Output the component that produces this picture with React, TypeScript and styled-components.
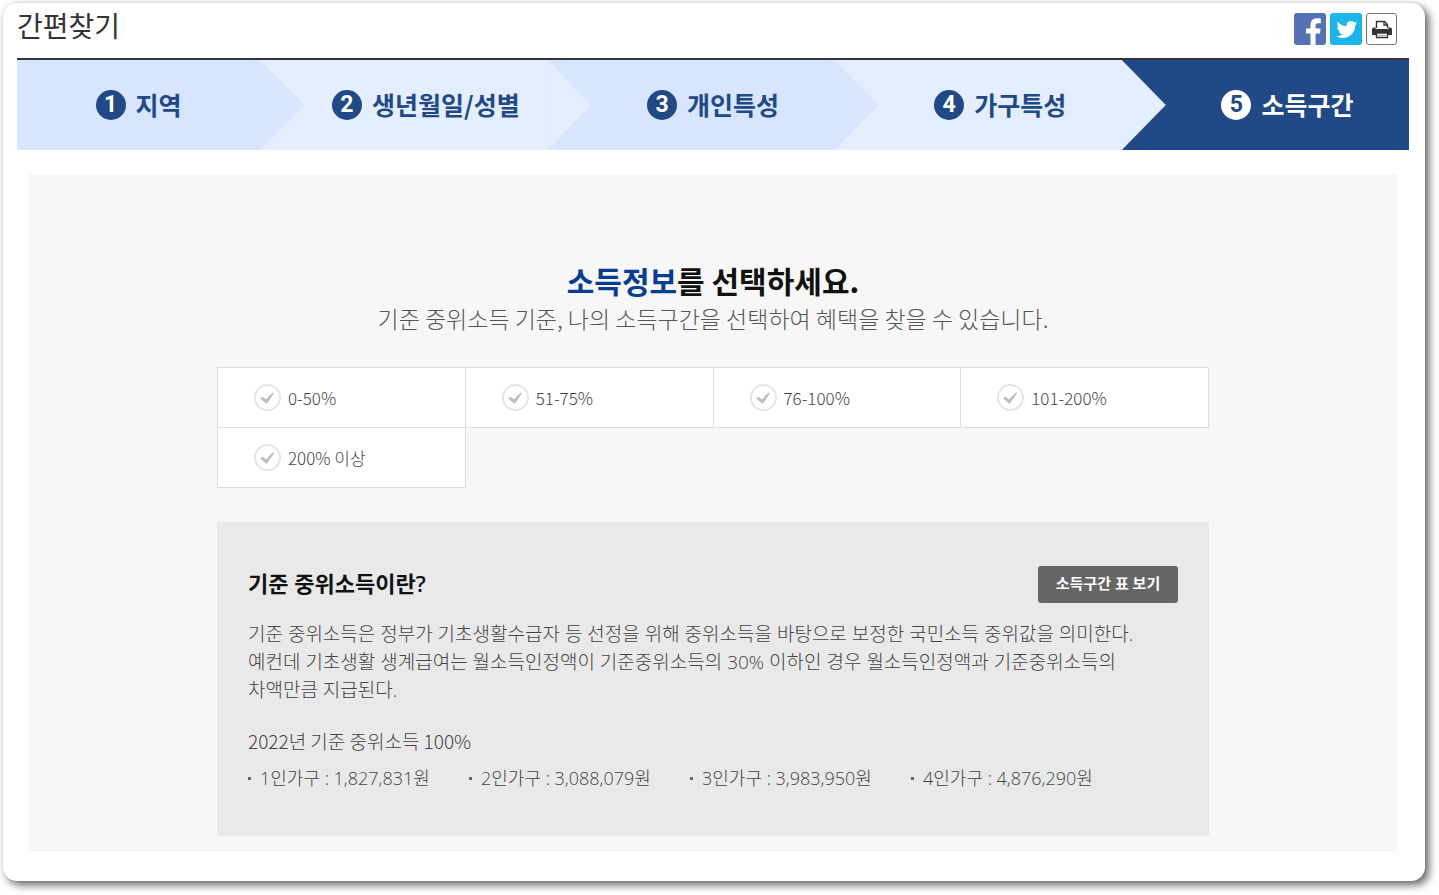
import React from "react";
import styled, { createGlobalStyle } from "styled-components";

const GlobalStyle = createGlobalStyle`
  * { box-sizing: border-box; }
  body {
    margin: 0;
    background: #fff;
    color: #555;
    font-family: "Noto Sans CJK KR", "Noto Sans", sans-serif;
    word-break: keep-all;
  }
  h1, h2, h3, p, ol, ul, fieldset { margin: 0; padding: 0; border: 0; }
  ol, ul { list-style: none; }
`;

const navy = "#214985";
const mixedFont = `"Open Sans", "Noto Sans CJK KR", sans-serif`;

const Shell = styled.main`
  margin: 3px 14px 14px 3px;
  padding: 0 16px 29px 14px;
  border-radius: 14px;
  background: #fff;
  box-shadow: 4px 4px 8px 0 rgba(0, 0, 0, 0.6), 0 0 4px rgba(0, 0, 0, 0.1);
`;

const Header = styled.header`
  display: flex;
  justify-content: space-between;
  height: 55px;
  padding-right: 12px;
`;

const PageTitle = styled.h1`
  color: #333;
  font-size: 28px;
  font-weight: 400;
  line-height: 44px;
`;

const Actions = styled.div`
  display: flex;
  gap: 4px;
  padding-top: 10px;
`;

const shareColors = { facebook: "#5472b5", twitter: "#1bb5ea" };

const ShareLink = styled.a<{ $kind: keyof typeof shareColors }>`
  width: 32px;
  height: 32px;
  border-radius: 3px;
  background: ${(p) => shareColors[p.$kind]};
  svg { display: block; }
`;

const PrintButton = styled.button`
  width: 31px;
  height: 32px;
  padding: 0;
  border: 1px solid #777;
  border-radius: 3px;
  background: #fff;
  svg { display: block; }
`;

const Steps = styled.ol`
  display: flex;
  height: 92px;
  border-top: 2px solid #333338;
`;

const stepColors = ["#d7e5ff", "#e4eeff", "#d7e5ff", "#e4eeff", navy];

const Step = styled.li<{ $index: number; $last: boolean }>`
  display: flex;
  flex: 1 1 ${(p) => (p.$last ? 0 : 44)}px;
  background: ${(p) => stepColors[p.$index]};
  color: ${(p) => (p.$last ? "#fff" : navy)};
`;

const StepLabel = styled.span`
  display: flex;
  flex: 1;
  align-items: center;
  justify-content: center;
  gap: 10px;
`;

const StepName = styled.span`
  padding-bottom: 2px;
  font-size: 25px;
  font-weight: 700;
  line-height: 34px;
  white-space: nowrap;
`;

const StepNumber = styled.span<{ $active: boolean }>`
  width: 30px;
  height: 30px;
  border-radius: 50%;
  background: ${(p) => (p.$active ? "#fff" : navy)};
  color: ${(p) => (p.$active ? navy : "#fff")};
  font-family: Roboto, sans-serif;
  font-size: 23px;
  font-weight: 700;
  line-height: 30px;
  text-align: center;
`;

const Chevron = styled.span<{ $index: number }>`
  width: 44px;
  background: ${(p) => stepColors[p.$index + 1]};
  &::before {
    content: "";
    display: block;
    height: 100%;
    background: ${(p) => stepColors[p.$index]};
    clip-path: polygon(0 0, 100% 50%, 0 100%);
  }
`;

const Panel = styled.section`
  margin: 24px 12px 0;
  padding: 87px 16px 16px;
  background: #f7f7f7;
`;

const Content = styled.div`
  max-width: 992px;
  margin: 0 auto;
`;

const Question = styled.h2`
  color: #111;
  font-size: 30px;
  font-weight: 700;
  line-height: 38px;
  text-align: center;
  em { color: #073e92; font-style: normal; }
`;

const Guide = styled.p`
  margin-bottom: 30px;
  color: #555;
  font-size: 23px;
  font-weight: 300;
  line-height: 38px;
  text-align: center;
`;

const Options = styled.fieldset`
  display: grid;
  grid-template-columns: repeat(4, 1fr);
  min-width: 0;
  padding: 1px 0 0 1px;
`;

const Option = styled.label`
  display: flex;
  align-items: center;
  gap: 7px;
  height: 61px;
  margin: -1px 0 0 -1px;
  padding-left: 36px;
  border: 1px solid #ddd;
  background: #fff;
  color: #444;
  font-size: 17px;
  font-weight: 300;
  cursor: pointer;
`;

const Tick = styled.span`
  display: grid;
  > * { grid-area: 1 / 1; }
  svg { color: #bdbdbd; pointer-events: none; }
  input:checked + svg { color: ${navy}; }
`;

const Radio = styled.input`
  appearance: none;
  width: 27px;
  height: 27px;
  margin: 0;
  border: 2px solid #e5e5e5;
  border-radius: 50%;
  background: #fff;
`;

const Info = styled.section`
  margin-top: 34px;
  padding: 44px 31px;
  background: #e9e9e9;
  color: #444;
`;

const InfoHead = styled.div`
  display: flex;
  align-items: flex-start;
  justify-content: space-between;
  margin-bottom: 17px;
`;

const InfoTitle = styled.h3`
  color: #111;
  font-family: ${mixedFont};
  font-size: 22px;
  font-weight: 600;
  line-height: 34px;
`;

const TableButton = styled.button`
  width: 140px;
  height: 37px;
  padding: 0 0 5px;
  border: 0;
  border-radius: 3px;
  background: #666;
  color: #fff;
  font-family: ${mixedFont};
  font-size: 15px;
  font-weight: 700;
`;

const InfoText = styled.p`
  margin-bottom: 22px;
  font-family: ${mixedFont};
  font-size: 19px;
  font-weight: 300;
  line-height: 28px;
`;

const InfoSubtitle = styled.p`
  font-size: 19px;
  font-weight: 300;
  line-height: 30px;
`;

const Amounts = styled.ul`
  display: flex;
  margin-top: 8px;
`;

const Amount = styled.li`
  display: flex;
  align-items: center;
  gap: 9px;
  width: 221px;
  font-family: ${mixedFont};
  font-size: 18px;
  font-weight: 300;
  line-height: 28px;
  white-space: nowrap;
  &::before {
    content: "";
    width: 3px;
    height: 3px;
    background: #666;
  }
`;

const steps = ["지역", "생년월일/성별", "개인특성", "가구특성", "소득구간"];
const ranges = ["0-50%", "51-75%", "76-100%", "101-200%", "200% 이상"];
const amounts = [
  "1인가구 : 1,827,831원",
  "2인가구 : 3,088,079원",
  "3인가구 : 3,983,950원",
  "4인가구 : 4,876,290원",
];

const FacebookIcon = () => (
  <svg width="32" height="32" viewBox="0 0 32 32" fill="#fff" aria-hidden="true">
    <path d="M16.500 32V20.500H12v-5h4.500V12c0-4.500 2.400-6.800 6.600-6.800 1.500 0 2.700.1 3.700.2v4.800h-2.700c-2 0-2.500.9-2.500 2.300v3h5l-.6 5h-4.400V32z" />
  </svg>
);

const TwitterIcon = () => (
  <svg width="32" height="32" viewBox="0 0 32 32" fill="#fff" aria-hidden="true">
    <g transform="translate(5.500 5.500) scale(.92)">
      <path d="M23.643 4.937c-.835.37-1.732.62-2.675.733.962-.576 1.700-1.490 2.048-2.578-.9.534-1.897.922-2.958 1.130-.85-.904-2.060-1.470-3.400-1.470-2.572 0-4.658 2.086-4.658 4.660 0 .364.042.718.120 1.060-3.873-.195-7.304-2.050-9.602-4.868-.4.690-.63 1.490-.63 2.342 0 1.616.823 3.043 2.072 3.878-.764-.025-1.482-.234-2.110-.583v.060c0 2.257 1.605 4.140 3.737 4.568-.392.106-.803.162-1.227.162-.3 0-.593-.028-.877-.082.593 1.850 2.313 3.198 4.352 3.234-1.595 1.250-3.604 1.995-5.786 1.995-.376 0-.747-.022-1.112-.065 2.062 1.323 4.510 2.093 7.140 2.093 8.570 0 13.255-7.098 13.255-13.254 0-.2-.005-.402-.014-.602.910-.658 1.700-1.477 2.323-2.410z" />
    </g>
  </svg>
);

const PrinterIcon = () => (
  <svg width="29" height="30" viewBox="0 0 29 30" aria-hidden="true">
    <path d="M9.500 14V7.500h8l3 3V14" fill="#fff" stroke="#333" strokeWidth="1.400" />
    <path d="M17 7.500v3.500h3.500" fill="none" stroke="#333" strokeWidth="1.300" />
    <path d="M7 13.500h1.500v1.500h13v-1.500H23a2 2 0 0 1 2 2V21h-4v-2H9v2H5v-5.500a2 2 0 0 1 2-2z" fill="#333" />
    <path d="M9.500 19h11v4.500h-11z" fill="#fff" stroke="#333" strokeWidth="1.400" />
    <path d="M10.500 21.500h9" stroke="#aaa" />
  </svg>
);

const CheckIcon = () => (
  <svg width="27" height="27" viewBox="0 0 27 27" aria-hidden="true">
    <path d="M6 14.200l2.700-1.500 3.200 2.700 6.300-6.500 2.300-.2-8 11.300z" fill="currentColor" />
  </svg>
);

export default function App() {
  return (
    <>
      <GlobalStyle />
      <Shell>
        <Header>
          <PageTitle>간편찾기</PageTitle>
          <Actions>
            <ShareLink $kind="facebook" href="#facebook" aria-label="페이스북 공유">
              <FacebookIcon />
            </ShareLink>
            <ShareLink $kind="twitter" href="#twitter" aria-label="트위터 공유">
              <TwitterIcon />
            </ShareLink>
            <PrintButton type="button" aria-label="인쇄">
              <PrinterIcon />
            </PrintButton>
          </Actions>
        </Header>
        <Steps>
          {steps.map((label, i) => {
            const last = i === steps.length - 1;
            return (
              <Step key={label} $index={i} $last={last} aria-current={last ? "step" : undefined}>
                <StepLabel>
                  <StepNumber $active={last}>{i + 1}</StepNumber>
                  <StepName>{label}</StepName>
                </StepLabel>
                {!last && <Chevron $index={i} />}
              </Step>
            );
          })}
        </Steps>
        <Panel>
          <Content>
            <Question>
              <em>소득정보</em>를 선택하세요.
            </Question>
            <Guide>기준 중위소득 기준, 나의 소득구간을 선택하여 혜택을 찾을 수 있습니다.</Guide>
            <Options aria-label="소득구간">
              {ranges.map((range) => (
                <Option key={range}>
                  <Tick>
                    <Radio type="radio" name="income" value={range} />
                    <CheckIcon />
                  </Tick>
                  {range}
                </Option>
              ))}
            </Options>
            <Info>
              <InfoHead>
                <InfoTitle>기준 중위소득이란?</InfoTitle>
                <TableButton type="button">소득구간 표 보기</TableButton>
              </InfoHead>
              <InfoText>
                기준 중위소득은 정부가 기초생활수급자 등 선정을 위해 중위소득을 바탕으로 보정한 국민소득 중위값을 의미한다.
                <br />
                예컨데 기초생활 생계급여는 월소득인정액이 기준중위소득의 30% 이하인 경우 월소득인정액과 기준중위소득의
                <br />
                차액만큼 지급된다.
              </InfoText>
              <InfoSubtitle>2022년 기준 중위소득 100%</InfoSubtitle>
              <Amounts>
                {amounts.map((amount) => (
                  <Amount key={amount}>{amount}</Amount>
                ))}
              </Amounts>
            </Info>
          </Content>
        </Panel>
      </Shell>
    </>
  );
}
